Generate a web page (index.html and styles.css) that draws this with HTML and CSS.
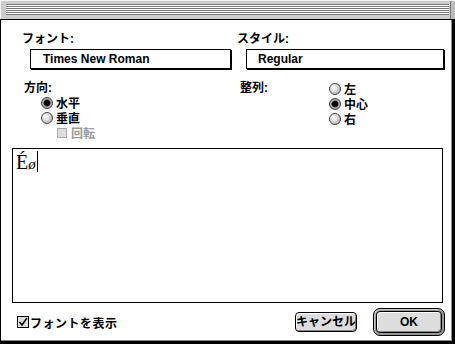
FILE: index.html
```html
<!DOCTYPE html>
<html lang="ja">
<head>
<meta charset="utf-8">
<link rel="stylesheet" href="styles.css">
</head>
<body>
<div class="window">
  <div class="titlebar"><div class="stripes"></div></div>
  <div class="content">
    <div class="top">
      <div class="col col-font">
        <div class="label">フォント:</div>
        <div class="field">Times New Roman</div>
      </div>
      <div class="col col-style">
        <div class="label">スタイル:</div>
        <div class="field">Regular</div>
      </div>
    </div>
    <div class="options">
      <div class="group dir">
        <div class="label">方向:</div>
        <div class="opts">
          <div class="opt"><span class="radio on"></span>水平</div>
          <div class="opt"><span class="radio"></span>垂直</div>
          <div class="opt sub disabled"><span class="dcheck"></span>回転</div>
        </div>
      </div>
      <div class="group align">
        <div class="label">整列:</div>
        <div class="opts">
          <div class="opt"><span class="radio"></span>左</div>
          <div class="opt"><span class="radio on"></span>中心</div>
          <div class="opt"><span class="radio"></span>右</div>
        </div>
      </div>
    </div>
    <div class="preview"><span class="sample">É<span class="oslash">ø</span></span><span class="caret"></span></div>
    <div class="footer">
      <div class="showfont">
        <span class="check"><svg width="10" height="10" viewBox="0 0 10 10"><path d="M1.5 5 L4 8 L9 1" fill="none" stroke="#000" stroke-width="1.6"/></svg></span>フォントを表示
      </div>
      <div class="spacer"></div>
      <div class="btn cancel">キャンセル</div>
      <div class="default-ring"><div class="btn ok">OK</div></div>
    </div>
  </div>
</div>
</body>
</html>
```
FILE: styles.css
```css
html, body {
  margin: 0;
  padding: 0;
  background: #fff;
}
body {
  font-family: "Liberation Sans", "Noto Sans CJK JP", sans-serif;
  font-weight: bold;
  font-size: 12px;
  color: #000;
}
.window {
  width: 455px;
  height: 344px;
  display: flex;
  flex-direction: column;
  background: #fff;
  overflow: hidden;
}
.titlebar {
  height: 20px;
  box-sizing: border-box;
  background: #ccc;
  border-bottom: 1px solid #000;
  box-shadow: inset 1px 1px 0 #f4f4f4, inset -4px 0 0 #bbb, inset -5px 0 0 #777;
  padding: 4px 6px 0 6px;
}
.stripes {
  height: 11px;
  width: 443px;
  background: repeating-linear-gradient(to bottom, #777 0 1px, #fff 1px 2px);
}
.content {
  flex: 1;
  display: flex;
  flex-direction: column;
  box-shadow: inset 1px 0 0 #000, inset -3px -3px 0 #000, inset -4px -4px 0 #888;
  padding-top: 12px;
}
.label {
  height: 14px;
  line-height: 14px;
}
.top {
  display: flex;
}
.col-font {
  width: 215px;
  padding-left: 22px;
}
.col-style {
  padding-left: 0;
}
.field {
  margin-top: 3px;
  height: 20px;
  box-sizing: border-box;
  border: 1px solid #000;
  box-shadow: 1px 1px 0 #000;
  line-height: 18px;
  padding-left: 12px;
}
.col-font .field {
  margin-left: 8px;
  width: 201px;
}
.col-style .field {
  margin-left: 9px;
  width: 198px;
  padding-left: 11px;
}
.options {
  display: flex;
  margin-top: 12px;
  height: 59px;
}
.dir {
  width: 216px;
  padding-left: 24px;
}
.dir .opts {
  padding-left: 17px;
}
.align {
  display: flex;
}
.align .label {
  width: 89px;
}
.opt {
  height: 15px;
  display: flex;
  align-items: center;
  gap: 3px;
}
.radio {
  width: 12px;
  height: 12px;
  box-sizing: border-box;
  border-radius: 50%;
  border: 1px solid #444;
  background: radial-gradient(circle at 35% 35%, #fff 0, #e4e4e4 35%, #999 100%);
}
.radio.on {
  background: radial-gradient(circle, #000 0 2.6px, #333 3px, #bbb 4px, #555 100%);
}
.opt.sub {
  padding-left: 16px;
}
.opt.disabled {
  color: #999;
}
.dcheck {
  width: 10px;
  height: 10px;
  box-sizing: border-box;
  border: 1px solid #aaa;
  background: #ddd;
  margin-right: 1px;
}
.preview {
  margin: 8px 0 0 12px;
  width: 431px;
  height: 155px;
  box-sizing: border-box;
  border: 1px solid #000;
  display: flex;
  align-items: flex-start;
  padding: 2px 0 0 3px;
}
.sample {
  font-family: "Liberation Serif", serif;
  font-weight: normal;
  font-size: 20px;
  line-height: 22px;
}
.oslash {
  font-style: italic;
  font-size: 15px;
}
.caret {
  width: 1px;
  height: 21px;
  background: #000;
  margin-left: 1px;
}
.footer {
  display: flex;
  align-items: center;
  margin-top: 5px;
  height: 28px;
  padding-left: 17px;
  padding-right: 10px;
}
.showfont {
  display: flex;
  align-items: center;
  gap: 1px;
  letter-spacing: 0.5px;
}
.check {
  width: 12px;
  height: 12px;
  box-sizing: border-box;
  border: 1px solid #000;
  background: #ddd;
  display: flex;
  align-items: center;
  justify-content: center;
}
.spacer {
  flex: 1;
}
.btn {
  box-sizing: border-box;
  border: 1px solid #000;
  border-radius: 4px;
  background: #ddd;
  box-shadow: inset 1px 1px 0 #fff, inset -1px -1px 0 #888;
  text-align: center;
}
.cancel {
  width: 62px;
  height: 20px;
  line-height: 18px;
  margin-right: 16px;
  white-space: nowrap;
}
.default-ring {
  width: 72px;
  height: 28px;
  box-sizing: border-box;
  border: 1px solid #000;
  border-radius: 7px;
  background: #999;
  box-shadow: inset 1px 1px 0 #ccc;
  padding: 2px;
}
.ok {
  width: 100%;
  height: 100%;
  line-height: 20px;
}
```
